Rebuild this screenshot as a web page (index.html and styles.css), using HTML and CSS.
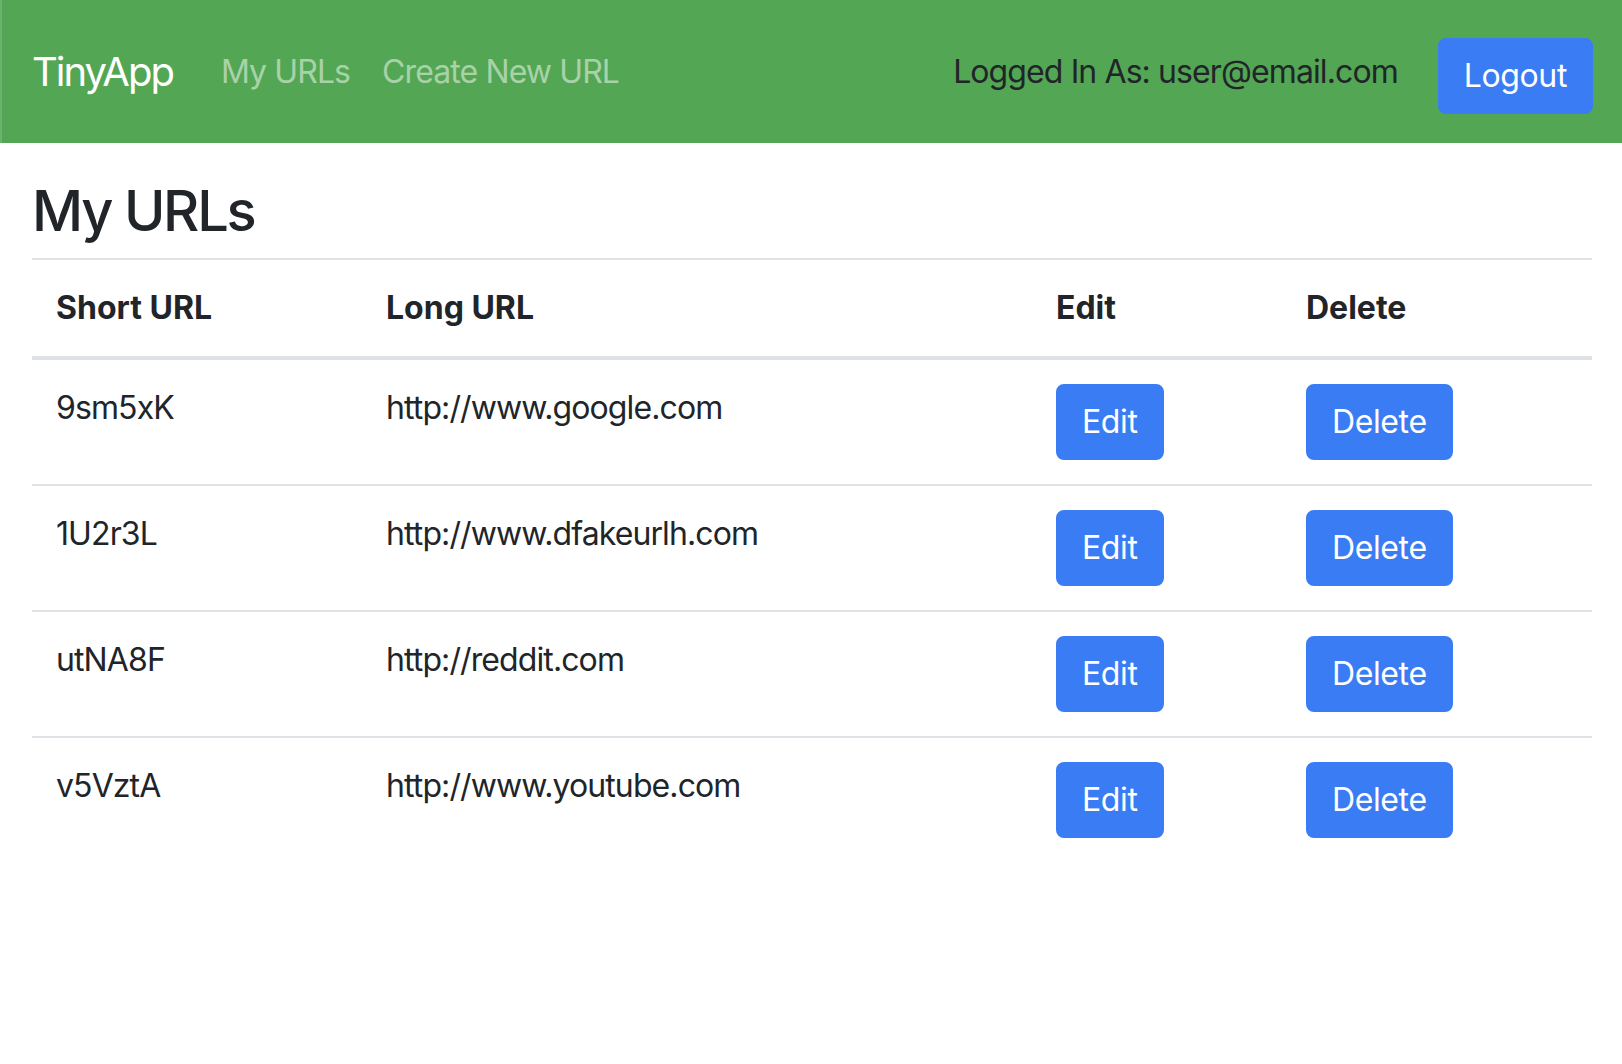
FILE: index.html
```html
<!DOCTYPE html>
<html lang="en">
<head>
<meta charset="utf-8">
<title>TinyApp</title>
<link rel="stylesheet" href="styles.css">
</head>
<body>
<nav class="navbar">
  <a class="brand" href="#">TinyApp</a>
  <div class="nav-links">
    <a class="nav-link" href="#">My URLs</a>
    <a class="nav-link" href="#">Create New URL</a>
  </div>
  <div class="nav-right">
    <span class="user">Logged In As: user@email.com</span>
    <button class="btn btn-logout" type="button">Logout</button>
  </div>
</nav>
<main class="content">
  <h3 class="title">My URLs</h3>
  <table class="table">
    <thead>
      <tr>
        <th class="col-short">Short URL</th>
        <th class="col-long">Long URL</th>
        <th class="col-edit">Edit</th>
        <th class="col-delete">Delete</th>
      </tr>
    </thead>
    <tbody>
      <tr>
        <td>9sm5xK</td>
        <td>http://www.google.com</td>
        <td><button class="btn" type="button">Edit</button></td>
        <td><button class="btn" type="button">Delete</button></td>
      </tr>
      <tr>
        <td>1U2r3L</td>
        <td>http://www.dfakeurlh.com</td>
        <td><button class="btn" type="button">Edit</button></td>
        <td><button class="btn" type="button">Delete</button></td>
      </tr>
      <tr>
        <td>utNA8F</td>
        <td>http://reddit.com</td>
        <td><button class="btn" type="button">Edit</button></td>
        <td><button class="btn" type="button">Delete</button></td>
      </tr>
      <tr>
        <td>v5VztA</td>
        <td>http://www.youtube.com</td>
        <td><button class="btn" type="button">Edit</button></td>
        <td><button class="btn" type="button">Delete</button></td>
      </tr>
    </tbody>
  </table>
</main>
</body>
</html>
```

FILE: styles.css
```css
* { box-sizing: border-box; }

html, body {
  margin: 0;
  padding: 0;
  background: #ffffff;
}

body {
  font-family: Inter, "Noto Sans", Roboto, sans-serif;
  font-size: 32px;
  line-height: 48px;
  letter-spacing: -0.028em;
  color: #212529;
}

.navbar {
  display: flex;
  align-items: center;
  height: 143px;
  padding: 0 29px 0 30px;
  background: #53a653;
  border-left: 2px solid #6ab36a;
}

.brand {
  font-size: 40px;
  line-height: 60px;
  letter-spacing: -0.05em;
  color: #ffffff;
  text-decoration: none;
  margin-right: 32px;
}

.nav-links {
  display: flex;
}

.nav-link {
  padding: 0 16px;
  color: rgba(255, 255, 255, 0.5);
  text-decoration: none;
}

.nav-right {
  margin-left: auto;
  display: flex;
  align-items: center;
  gap: 40px;
}

.user {
  color: #212529;
}

.btn {
  font-family: inherit;
  font-size: 32px;
  line-height: 48px;
  letter-spacing: -0.012em;
  padding: 12px 24px;
  border: 2px solid #3a7cf4;
  border-radius: 8px;
  background: #3a7cf4;
  color: #ffffff;
  cursor: pointer;
}

.btn-logout {
  margin-top: 8px;
}

.content {
  padding: 32px 30px 0 32px;
}

.title {
  margin: 0 0 13px;
  padding-top: 3px;
  font-size: 56px;
  line-height: 67px;
  font-weight: 500;
  letter-spacing: -0.04em;
}

.table {
  width: 100%;
  border-collapse: collapse;
}

.table th,
.table td {
  padding: 24px;
  text-align: left;
  vertical-align: top;
  border-top: 2px solid #dee2e6;
}

.table th {
  font-weight: 700;
  letter-spacing: 0;
}

.table thead th {
  border-bottom: 4px solid #dee2e6;
}

.col-short { width: 330px; }
.col-long { width: 670px; }
.col-edit { width: 250px; }
```
